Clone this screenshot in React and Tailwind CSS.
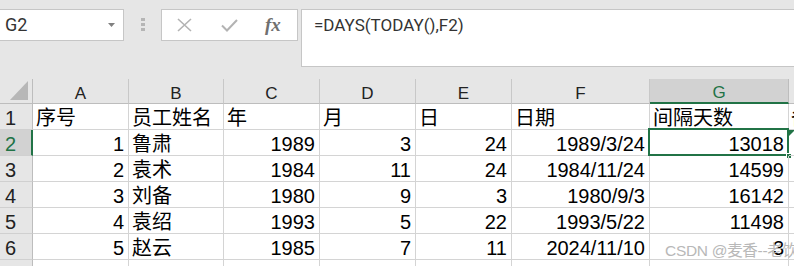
import React from "react";

const cols = [
  { key: "A", w: "w-[96px]" },
  { key: "B", w: "w-[95px]" },
  { key: "C", w: "w-[96px]" },
  { key: "D", w: "w-[96px]" },
  { key: "E", w: "w-[96px]" },
  { key: "F", w: "w-[138px]" },
  { key: "G", w: "w-[139px]" },
];

const head = ["序号", "员工姓名", "年", "月", "日", "日期", "间隔天数"];

const rows = [
  [1, "鲁肃", 1989, 3, 24, "1989/3/24", 13018],
  [2, "袁术", 1984, 11, 24, "1984/11/24", 14599],
  [3, "刘备", 1980, 9, 3, "1980/9/3", 16142],
  [4, "袁绍", 1993, 5, 22, "1993/5/22", 11498],
  [5, "赵云", 1985, 7, 11, "2024/11/10", 3],
];

const cellFont = "font-['Liberation_Sans','Noto_Sans_CJK_SC',sans-serif] text-[20px] leading-[22px] text-black";

const Cell = ({ w, children, right, selected }) => (
  <div
    className={`${w} relative h-[26px] shrink-0 border-r border-b border-[#d4d4d4] flex items-end ${
      right ? "justify-end pr-[4px]" : "pl-[3px]"
    } ${cellFont} whitespace-nowrap`}
  >
    {children}
    {selected && (
      <>
        <div className="absolute left-[-2px] top-[-2px] right-[-1px] bottom-[-1px] border-2 border-[#217346]" />
        <div className="absolute right-[-4px] bottom-[-4px] w-[6px] h-[6px] bg-[#217346] border border-white" />
      </>
    )}
  </div>
);

const RowHead = ({ n, active }) => (
  <div
    className={`w-[33px] h-[26px] shrink-0 border-b border-[#d0d0d0] flex items-end pl-[5px] ${
      active
        ? "bg-[#d2d2d2] border-r-2 border-r-[#217346] text-[#217346]"
        : "bg-[#e6e6e6] border-r border-r-[#bdbdbd] text-[#222]"
    } font-['Liberation_Sans',sans-serif] text-[20px] leading-[22px]`}
  >
    {n}
  </div>
);

export default function App() {
  return (
    <div className="w-[794px] h-[266px] overflow-hidden bg-white relative">
      {/* formula bar */}
      <div className="h-[79px] bg-[#e6e6e6] flex items-start pt-[9px]">
        <div className="w-[124px] h-[32px] bg-white border border-l-0 border-[#c6c6c6] flex items-center justify-between pl-[5px] pr-[8px] font-['Roboto',sans-serif] text-[18px] leading-[22px] text-[#333]">
          <span>G2</span>
          <svg width="7" height="4" viewBox="0 0 7 4">
            <polygon points="0,0 7,0 3.5,4" fill="#808080" />
          </svg>
        </div>
        <div className="ml-[17px] mt-[9px] flex flex-col gap-[2px]">
          <div className="w-[4px] h-[3px] bg-[#b5b5b5]" />
          <div className="w-[4px] h-[3px] bg-[#b5b5b5]" />
          <div className="w-[4px] h-[3px] bg-[#b5b5b5]" />
        </div>
        <div className="ml-[16px] w-[137px] h-[32px] bg-white border border-[#c6c6c6] flex items-center">
          <svg className="ml-[15px]" width="15" height="14" viewBox="0 0 15 14">
            <path d="M1 1 L14 13 M14 1 L1 13" stroke="#b3b3b3" strokeWidth="1.6" fill="none" />
          </svg>
          <svg className="ml-[29px]" width="17" height="13" viewBox="0 0 17 13">
            <path d="M1 6.5 L6 11.5 L16 1" stroke="#b3b3b3" strokeWidth="2" fill="none" />
          </svg>
          <span className="ml-[27px] font-['Liberation_Serif',serif] italic font-bold text-[19px] leading-[20px] text-[#707070]">
            fx
          </span>
        </div>
        <div className="ml-[3px] flex-1 h-[58px] bg-white border border-r-0 border-[#c6c6c6] pl-[12px] pt-[4px] font-['Roboto',sans-serif] text-[17px] leading-[22px] text-[#333]">
          =DAYS(TODAY(),F2)
        </div>
      </div>

      {/* column headers */}
      <div className="flex h-[25px] bg-[#e6e6e6]">
        <div className="w-[33px] h-[25px] shrink-0 border-r border-b border-[#bdbdbd] relative">
          <svg className="absolute left-[10px] top-[2px]" width="18" height="19" viewBox="0 0 18 19">
            <polygon points="18,0 18,19 0,19" fill="#b7b7b7" />
          </svg>
        </div>
        {cols.map((c) => (
          <div
            key={c.key}
            className={`${c.w} h-[25px] shrink-0 flex items-end justify-center border-r font-['Liberation_Sans',sans-serif] text-[17px] leading-[18px] ${
              c.key === "G"
                ? "bg-[#d2d2d2] text-[#217346] border-r-[#bdbdbd] border-b-2 border-b-[#217346]"
                : "text-[#222] border-r-[#c8c8c8] border-b border-b-[#bdbdbd]"
            }`}
          >
            {c.key}
          </div>
        ))}
        <div className="flex-1 h-[25px] border-b border-[#bdbdbd]" />
      </div>

      {/* row 1 */}
      <div className="flex">
        <RowHead n={1} />
        {cols.map((c, i) => (
          <Cell key={c.key} w={c.w}>
            {head[i]}
          </Cell>
        ))}
        <div className={`flex-1 h-[26px] border-b border-[#d4d4d4] overflow-hidden pl-[2px] flex items-end ${cellFont}`}>
          备
        </div>
      </div>

      {rows.map((r, ri) => (
        <div key={ri} className="flex">
          <RowHead n={ri + 2} active={ri === 0} />
          {cols.map((c, i) => (
            <Cell key={c.key} w={c.w} right={i !== 1} selected={ri === 0 && i === 6}>
              {r[i]}
            </Cell>
          ))}
          <div className="flex-1 h-[26px] border-b border-[#d4d4d4] relative">
            {ri === 0 && (
              <svg className="absolute left-0 top-0" width="6" height="6" viewBox="0 0 6 6">
                <polygon points="0,0 6,0 0,6" fill="#217346" />
              </svg>
            )}
          </div>
        </div>
      ))}

      {/* row 7 (partial, number below the fold) */}
      <div className="flex">
        <RowHead n="" />
        {cols.map((c) => (
          <Cell key={c.key} w={c.w} />
        ))}
      </div>

      {/* watermark */}
      <div className="absolute left-[665px] top-[241px] whitespace-nowrap font-['Liberation_Sans','Noto_Sans_CJK_SC',sans-serif] text-[15.5px] leading-[20px] text-[#b8b8b8] tracking-[-0.3px]">
        CSDN @麦香--老饮
      </div>
    </div>
  );
}
